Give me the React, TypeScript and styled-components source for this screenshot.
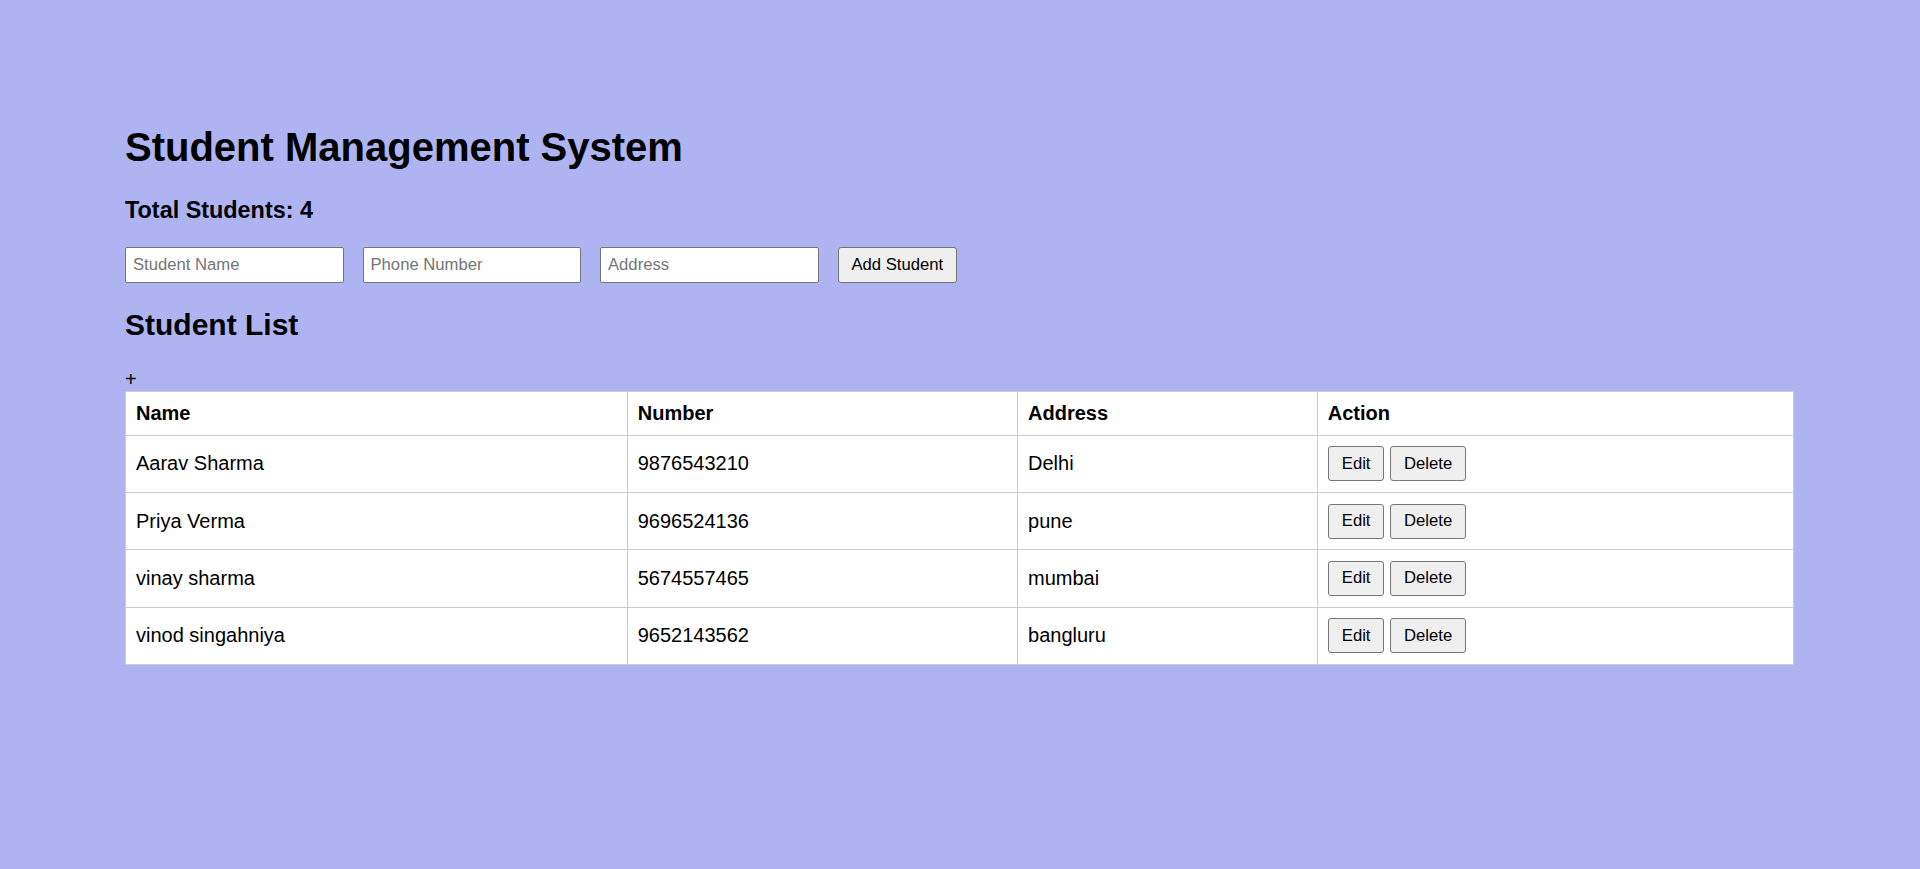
import React, { useState } from 'react';
import styled, { createGlobalStyle } from 'styled-components';

const GlobalStyle = createGlobalStyle`
  html, body {
    margin: 0;
    padding: 0;
  }

  body {
    background: #aeb4f2;
    font-family: "Liberation Sans", Arial, sans-serif;
    font-size: 20px;
    color: #000;
  }
`;

const Page = styled.div`
  min-height: 869px;
  box-sizing: border-box;
  padding: 124px 126px 0 125px;
`;

const Title = styled.h1`
  font-size: 40px;
  font-weight: bold;
  line-height: 46px;
  margin: 0 0 26.8px;
`;

const Total = styled.h3`
  font-size: 23.4px;
  font-weight: bold;
  line-height: 27px;
  margin: 0 0 23.4px;
`;

const Toolbar = styled.div`
  display: flex;
  align-items: center;
  gap: 18.75px;
`;

const TextInput = styled.input`
  box-sizing: border-box;
  width: 218.75px;
  height: 36px;
  padding: 0 7px;
  border: 1px solid #767676;
  border-radius: 2px;
  background: #fff;
  font-family: "Liberation Sans", Arial, sans-serif;
  font-size: 16.67px;
  color: #000;

  &::placeholder {
    color: #757575;
  }
`;

const Button = styled.button<{ $tall?: boolean }>`
  box-sizing: border-box;
  height: ${(p) => (p.$tall ? '36px' : '35px')};
  padding: 0 13px;
  border: 1px solid #767676;
  border-radius: 3px;
  background: #efefef;
  font-family: "Liberation Sans", Arial, sans-serif;
  font-size: 16.67px;
  color: #000;
  cursor: pointer;
`;

const SubTitle = styled.h2`
  font-size: 30px;
  font-weight: bold;
  line-height: 34.5px;
  margin: 25px 0 25px;
`;

const Plus = styled.div`
  line-height: 23px;
`;

const Table = styled.table`
  width: 100%;
  table-layout: fixed;
  border-collapse: collapse;
  background: #fff;
`;

const Th = styled.th`
  text-align: left;
  font-weight: bold;
  line-height: 23px;
  padding: 10px 10px 10px;
  border: 1px solid #ccc;
`;

const Td = styled.td`
  line-height: 23px;
  padding: 10.65px 10px;
  border: 1px solid #ccc;
  vertical-align: middle;
`;

const Actions = styled.div`
  display: flex;
  gap: 5.6px;
`;

type Student = { name: string; number: string; address: string };

const initial: Student[] = [
  { name: 'Aarav Sharma', number: '9876543210', address: 'Delhi' },
  { name: 'Priya Verma', number: '9696524136', address: 'pune' },
  { name: 'vinay sharma', number: '5674557465', address: 'mumbai' },
  { name: 'vinod singahniya', number: '9652143562', address: 'bangluru' },
];

const App: React.FC = () => {
  const [students, setStudents] = useState<Student[]>(initial);
  const [name, setName] = useState('');
  const [number, setNumber] = useState('');
  const [address, setAddress] = useState('');

  const handleAdd = () => {
    if (!name || !number || !address) return;
    setStudents([...students, { name, number, address }]);
    setName('');
    setNumber('');
    setAddress('');
  };

  const handleDelete = (index: number) => {
    setStudents(students.filter((_, i) => i !== index));
  };

  return (
    <>
      <GlobalStyle />
      <Page>
        <Title>Student Management System</Title>
        <Total>Total Students: {students.length}</Total>
        <Toolbar>
          <TextInput placeholder="Student Name" value={name} onChange={(e) => setName(e.target.value)} />
          <TextInput placeholder="Phone Number" value={number} onChange={(e) => setNumber(e.target.value)} />
          <TextInput placeholder="Address" value={address} onChange={(e) => setAddress(e.target.value)} />
          <Button $tall onClick={handleAdd}>Add Student</Button>
        </Toolbar>
        <SubTitle>Student List</SubTitle>
        <Plus>+</Plus>
        <Table>
          <colgroup>
            <col style={{ width: '30.08%' }} />
            <col style={{ width: '23.4%' }} />
            <col style={{ width: '17.97%' }} />
            <col style={{ width: '28.55%' }} />
          </colgroup>
          <thead>
            <tr>
              <Th>Name</Th>
              <Th>Number</Th>
              <Th>Address</Th>
              <Th>Action</Th>
            </tr>
          </thead>
          <tbody>
            {students.map((s, index) => (
              <tr key={index}>
                <Td>{s.name}</Td>
                <Td>{s.number}</Td>
                <Td>{s.address}</Td>
                <Td>
                  <Actions>
                    <Button>Edit</Button>
                    <Button onClick={() => handleDelete(index)}>Delete</Button>
                  </Actions>
                </Td>
              </tr>
            ))}
          </tbody>
        </Table>
      </Page>
    </>
  );
};

export default App;
